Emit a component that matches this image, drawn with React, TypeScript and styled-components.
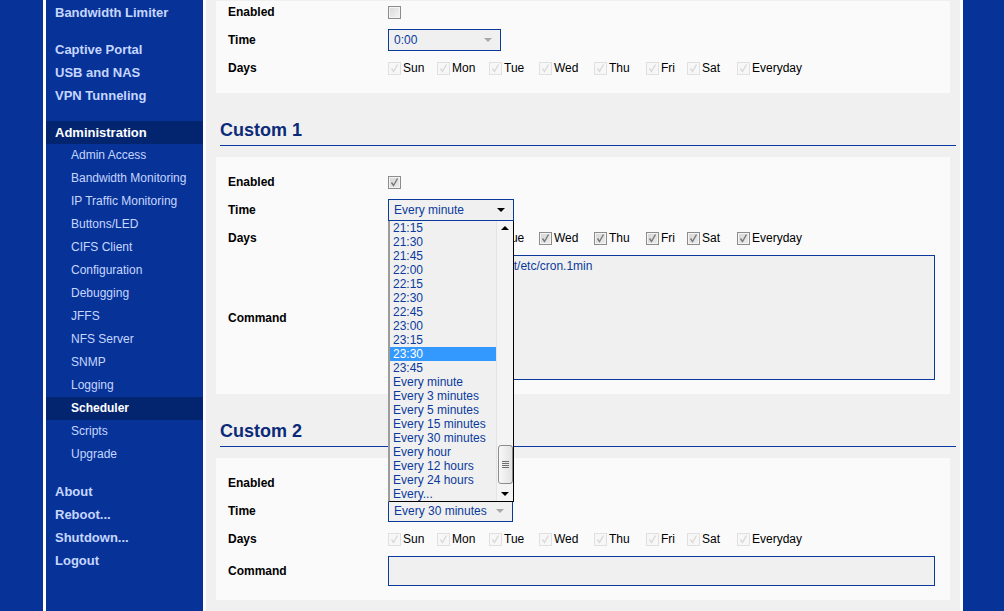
import React from "react";
import styled, { createGlobalStyle } from "styled-components";

const Global = createGlobalStyle`
  html, body { margin: 0; padding: 0; background: #073399; }
  body { font-family: "Liberation Sans", Arial, sans-serif; font-size: 12px; overflow: hidden; }
  * { box-sizing: border-box; }
`;

const Frame = styled.div`
  display: flex;
  margin-left: 43px;
  width: 920px;
  height: 611px;
  overflow: hidden;
  border-left: 3px solid #fff;
  border-right: 3px solid #fff;
`;

const Sidebar = styled.nav`
  flex: none;
  width: 157px;
  background: #073399;
  padding-top: 1px;
  display: flex;
  flex-direction: column;
`;

const NavItem = styled.div<{ $sub?: boolean; $active?: boolean; $gap?: boolean }>`
  height: 23px;
  line-height: 23px;
  padding-left: ${(p) => (p.$sub ? 25 : 9)}px;
  margin-top: ${(p) => (p.$gap ? 14 : 0)}px;
  font-size: ${(p) => (p.$sub ? 12 : 13)}px;
  font-weight: ${(p) => (!p.$sub || p.$active ? "bold" : "normal")};
  color: ${(p) => (p.$active ? "#ffffff" : "#c6d6ff")};
  background: ${(p) => (p.$active ? "#03256f" : "transparent")};
  white-space: nowrap;
`;

const Main = styled.main`
  flex: none;
  width: 757px;
  padding: 1px 10px 0;
  border-left: 3px solid #fff;
  background: #f0f0f0;
`;

const SectionTitle = styled.h2`
  margin: 26px -6px 11px 4px;
  padding: 0 0 4px;
  font-size: 18px;
  line-height: 22px;
  font-weight: bold;
  color: #0b2a78;
  border-bottom: 1px solid #0a3aa0;
`;

const Panel = styled.div<{ $cut?: boolean }>`
  background: #fafafa;
  padding: ${(p) => (p.$cut ? 0 : 14)}px 15px 14px 12px;
  display: grid;
  grid-template-columns: 160px 1fr;
  row-gap: 6px;
  align-items: center;
`;

const Label = styled.div`
  font-weight: bold;
  font-size: 12px;
  color: #000;
  line-height: 22px;
`;

const Field = styled.div`
  display: flex;
  align-items: center;
  min-height: 22px;
`;

type BoxState = "on" | "off" | "dis";

const Box = styled.span<{ $state: BoxState }>`
  flex: none;
  display: inline-flex;
  align-items: center;
  justify-content: center;
  width: 13px;
  height: 13px;
  border: 1px solid ${(p) => (p.$state === "dis" ? "#e0e0e0" : "#8c8c8c")};
  background: ${(p) =>
    p.$state === "dis"
      ? "#f7f7f7"
      : p.$state === "on"
      ? "linear-gradient(135deg, #d6d6d6, #ececec)"
      : "linear-gradient(135deg, #d8d8d8, #f6f6f6)"};
  box-shadow: ${(p) => (p.$state === "dis" ? "none" : "inset 0 0 0 1px #f4f4f4")};
`;

const Check = ({ state }: { state: BoxState }) => (
  <Box $state={state}>
    {state !== "off" && (
      <svg width="11" height="11" viewBox="0 0 11 11">
        <path
          d="M2.5 5.5 L4.5 8.5 L8.5 1.5"
          fill="none"
          stroke={state === "dis" ? "#d9d9d9" : "#777"}
          strokeWidth="1.4"
        />
      </svg>
    )}
  </Box>
);

const Days = styled.div`
  display: flex;
  align-items: center;
`;

const Day = styled.span<{ $w: number }>`
  display: inline-flex;
  align-items: center;
  gap: 2px;
  width: ${(p) => p.$w}px;
  flex: none;
  font-size: 12px;
  color: #000;
  white-space: nowrap;
`;

const SelectBox = styled.div<{ $w: number }>`
  position: relative;
  width: ${(p) => p.$w}px;
  height: 22px;
  border: 1px solid #0a3a9c;
  background: #f0f0f0;
  color: #0a3a9c;
  font-size: 12px;
  padding: 0 8px 0 5px;
  display: flex;
  align-items: center;
  justify-content: space-between;
  white-space: nowrap;
`;

const Arrow = styled.span<{ $dim?: boolean; $up?: boolean }>`
  width: 0;
  height: 0;
  border-left: 4px solid transparent;
  border-right: 4px solid transparent;
  ${(p) => (p.$up ? "border-bottom" : "border-top")}: 4px solid ${(p) => (p.$dim ? "#a8a8a8" : "#000")};
`;

const List = styled.div`
  position: absolute;
  left: -1px;
  top: calc(100% + 1px);
  width: 126px;
  height: 281px;
  display: flex;
  background: #f0f0f0;
  border-left: 2px solid #9c9c9c;
  border-right: 1px solid #000;
  border-bottom: 1px solid #000;
  z-index: 10;
`;

const Options = styled.div`
  flex: 1;
  display: flex;
  flex-direction: column;
`;

const Option = styled.div<{ $sel?: boolean }>`
  height: 14px;
  line-height: 14px;
  padding-left: 3px;
  font-size: 12px;
  color: ${(p) => (p.$sel ? "#ffffff" : "#0a3a9c")};
  background: ${(p) => (p.$sel ? "#3399ff" : "transparent")};
  white-space: nowrap;
`;

const ScrollBar = styled.div`
  flex: none;
  width: 17px;
  display: flex;
  flex-direction: column;
  background: #f4f4f4;
  border-left: 1px solid #e4e4e4;
`;

const ScrollBtn = styled.div`
  height: 14px;
  display: flex;
  align-items: center;
  justify-content: center;
`;

const Track = styled.div`
  flex: 1;
  display: flex;
  flex-direction: column;
  justify-content: flex-end;
  align-items: center;
  padding-bottom: 3px;
`;

const Thumb = styled.div`
  width: 15px;
  height: 39px;
  border: 1px solid #8c8c8c;
  border-radius: 3px;
  background: linear-gradient(90deg, #f8f8f8, #e2e2e2);
  display: flex;
  flex-direction: column;
  align-items: center;
  justify-content: center;
  gap: 1px;
`;

const Grip = styled.span`
  width: 7px;
  height: 1px;
  background: #6e6e6e;
`;

const TextArea = styled.div<{ $h: number }>`
  width: 100%;
  height: ${(p) => p.$h}px;
  border: 1px solid #0a3a9c;
  background: #f0f0f0;
  color: #0a3a9c;
  font-size: 12px;
  line-height: 14px;
  padding: 3px 5px 3px 8px;
  white-space: nowrap;
  overflow: hidden;
`;

const dayDefs: [string, number][] = [
  ["Sun", 49],
  ["Mon", 52],
  ["Tue", 50],
  ["Wed", 55],
  ["Thu", 52],
  ["Fri", 41],
  ["Sat", 50],
  ["Everyday", 70],
];

const DayRow = ({ state }: { state: BoxState }) => (
  <Days>
    {dayDefs.map(([d, w]) => (
      <Day key={d} $w={w}>
        <Check state={state} />
        {d}
      </Day>
    ))}
  </Days>
);

const options = [
  "21:15", "21:30", "21:45", "22:00", "22:15", "22:30", "22:45", "23:00", "23:15",
  "23:30", "23:45", "Every minute", "Every 3 minutes", "Every 5 minutes",
  "Every 15 minutes", "Every 30 minutes", "Every hour", "Every 12 hours",
  "Every 24 hours", "Every...",
];

const nav: { t: string; sub?: boolean; active?: boolean; gap?: boolean }[] = [
  { t: "Bandwidth Limiter" },
  { t: "Captive Portal", gap: true },
  { t: "USB and NAS" },
  { t: "VPN Tunneling" },
  { t: "Administration", active: true, gap: true },
  { t: "Admin Access", sub: true },
  { t: "Bandwidth Monitoring", sub: true },
  { t: "IP Traffic Monitoring", sub: true },
  { t: "Buttons/LED", sub: true },
  { t: "CIFS Client", sub: true },
  { t: "Configuration", sub: true },
  { t: "Debugging", sub: true },
  { t: "JFFS", sub: true },
  { t: "NFS Server", sub: true },
  { t: "SNMP", sub: true },
  { t: "Logging", sub: true },
  { t: "Scheduler", sub: true, active: true },
  { t: "Scripts", sub: true },
  { t: "Upgrade", sub: true },
  { t: "About", gap: true },
  { t: "Reboot..." },
  { t: "Shutdown..." },
  { t: "Logout" },
];

export default function App() {
  return (
    <>
      <Global />
      <Frame>
        <Sidebar>
          {nav.map((n) => (
            <NavItem key={n.t} $sub={n.sub} $active={n.active} $gap={n.gap}>
              {n.t}
            </NavItem>
          ))}
        </Sidebar>
        <Main>
          <Panel $cut>
            <Label>Enabled</Label>
            <Field>
              <Check state="off" />
            </Field>
            <Label>Time</Label>
            <Field>
              <SelectBox $w={113}>
                0:00
                <Arrow $dim />
              </SelectBox>
            </Field>
            <Label>Days</Label>
            <Field>
              <DayRow state="dis" />
            </Field>
          </Panel>

          <SectionTitle>Custom 1</SectionTitle>
          <Panel>
            <Label>Enabled</Label>
            <Field>
              <Check state="on" />
            </Field>
            <Label>Time</Label>
            <Field>
              <SelectBox $w={126}>
                Every minute
                <Arrow />
                <List>
                  <Options>
                    {options.map((o) => (
                      <Option key={o} $sel={o === "23:30"}>
                        {o}
                      </Option>
                    ))}
                  </Options>
                  <ScrollBar>
                    <ScrollBtn>
                      <Arrow $up />
                    </ScrollBtn>
                    <Track>
                      <Thumb>
                        <Grip />
                        <Grip />
                        <Grip />
                        <Grip />
                      </Thumb>
                    </Track>
                    <ScrollBtn>
                      <Arrow />
                    </ScrollBtn>
                  </ScrollBar>
                </List>
              </SelectBox>
            </Field>
            <Label>Days</Label>
            <Field>
              <DayRow state="on" />
            </Field>
            <Label>Command</Label>
            <Field>
              <TextArea $h={125}>/opt/sbin/run-parts /opt/etc/cron.1min</TextArea>
            </Field>
          </Panel>

          <SectionTitle>Custom 2</SectionTitle>
          <Panel>
            <Label>Enabled</Label>
            <Field>
              <Check state="off" />
            </Field>
            <Label>Time</Label>
            <Field>
              <SelectBox $w={125}>
                Every 30 minutes
                <Arrow $dim />
              </SelectBox>
            </Field>
            <Label>Days</Label>
            <Field>
              <DayRow state="dis" />
            </Field>
            <Label>Command</Label>
            <Field>
              <TextArea $h={30} />
            </Field>
          </Panel>
        </Main>
      </Frame>
    </>
  );
}
